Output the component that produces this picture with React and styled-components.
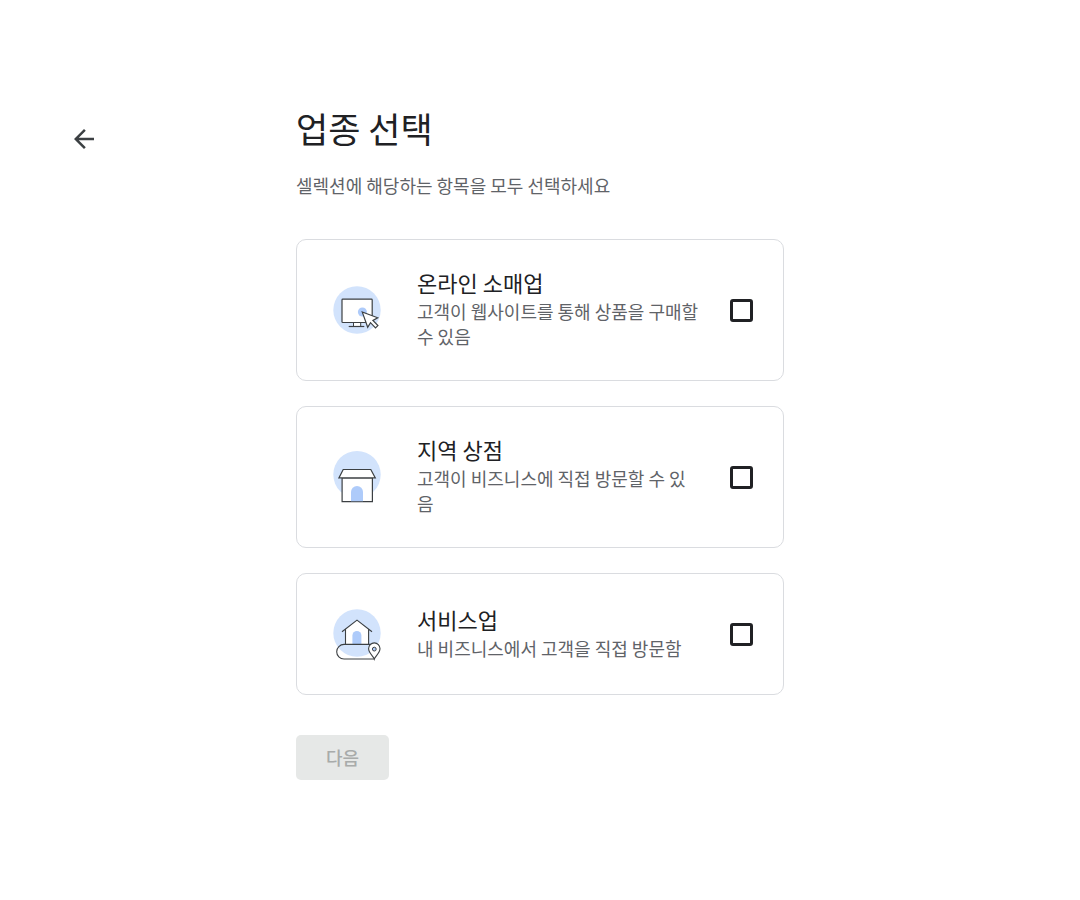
import React, { useState } from 'react'
import styled, { createGlobalStyle } from 'styled-components'

const GlobalStyle = createGlobalStyle`
  *, *::before, *::after {
    box-sizing: border-box;
  }

  body {
    margin: 0;
    background: #fff;
    color: #202124;
    font-family: "Noto Sans CJK KR", "Noto Sans", sans-serif;
  }
`

const Page = styled.main`
  display: grid;
  grid-template-columns: 1fr minmax(0, 488px) 1fr;
  padding: 105px 0 60px;
`

const Side = styled.div`
  padding: 10px 0 0 60px;
`

const BackButton = styled.button`
  display: flex;
  padding: 9px;
  border: 0;
  border-radius: 50%;
  background: none;
  color: #3c4043;
  cursor: pointer;

  svg {
    width: 30px;
    height: 30px;
    fill: currentColor;
  }
`

const Title = styled.h1`
  margin: 0;
  font-weight: 400;
  font-size: 35px;
  line-height: 45px;
`

const Subtitle = styled.p`
  margin: 22px 0 41px;
  color: #5f6368;
  font-size: 18px;
  line-height: 26px;
`

const CardList = styled.div`
  display: flex;
  flex-direction: column;
  gap: 25px;
`

const Card = styled.label`
  display: flex;
  align-items: center;
  gap: 30px;
  padding: 30px;
  border: 1px solid #dadce0;
  border-radius: 10px;
  cursor: pointer;
`

const Art = styled.svg`
  flex: none;
  width: 60px;
  height: 60px;
  fill: none;
`

const CardText = styled.span`
  display: flex;
  flex: 1;
  flex-direction: column;
  gap: 4px;
  min-width: 0;
  padding-bottom: 1px;
`

const CardTitle = styled.span`
  font-size: 22px;
  line-height: 25px;
`

const CardDescription = styled.span`
  color: #5f6368;
  font-size: 18px;
  line-height: 25px;
`

const Checkbox = styled.input`
  flex: none;
  appearance: none;
  width: 23px;
  height: 23px;
  margin: 0;
  border: 3px solid #202124;
  border-radius: 3px;
  background: #fff;
  cursor: pointer;

  &:checked {
    border-color: #1a73e8;
    background: #1a73e8;
  }
`

const NextButton = styled.button`
  height: 45px;
  margin-top: 40px;
  padding: 0 30px;
  border: 0;
  border-radius: 5px;
  background: #1a73e8;
  color: #fff;
  font-family: inherit;
  font-weight: 500;
  font-size: 18px;
  line-height: 25px;

  &:disabled {
    background: #e6e8e7;
    color: #a8abaa;
  }
`

const OnlineArt = () => (
  <Art viewBox="0 0 60 60" aria-hidden="true">
    <circle cx="30" cy="30" r="23.7" fill="#d2e3fc" />
    <rect x="15" y="19.2" width="30.2" height="23.3" rx="0.8" fill="#fff" stroke="#3c4043" strokeWidth="1.2" />
    <path d="M26.5 43v3.5h7.2V43" fill="#fff" stroke="#3c4043" />
    <path d="M21.7 46.5h15.6" stroke="#3c4043" strokeWidth="1.2" />
    <circle cx="35.4" cy="32" r="4.5" fill="#aecbfa" />
    <path
      d="M35.2 31.9l5.5 15.4 2.8-4.6 5 5.2 2.4-2.3-5-5.1 4.8-2.7z"
      fill="#fff"
      stroke="#3c4043"
      strokeWidth="1.2"
    />
  </Art>
)

const StoreArt = () => (
  <Art viewBox="0 0 60 60" aria-hidden="true">
    <circle cx="30" cy="27.6" r="23.7" fill="#d2e3fc" />
    <path d="M15.1 31h30.3v23.7H15.1z" fill="#fff" stroke="#3c4043" strokeWidth="1.2" />
    <path d="M16.2 22.5h27.6l4.5 8.4H11.9z" fill="#fff" stroke="#3c4043" strokeWidth="1.2" />
    <path d="M24 54.2V45a6 6 0 0 1 12 0v9.2z" fill="#aecbfa" />
  </Art>
)

const ServiceArt = () => (
  <Art viewBox="0 0 60 60" aria-hidden="true">
    <circle cx="30" cy="29" r="23.7" fill="#d2e3fc" />
    <path d="M18.5 40.3V25.5L30 16.2l11.6 9.3v14.8z" fill="#fff" />
    <path d="M18.5 40.3V25.2M41.6 40.3V25.2M15 27.8l15-11.7 15 11.7" stroke="#3c4043" strokeWidth="1.1" />
    <path d="M25.4 40.2v-8.7a4.5 4.5 0 0 1 9 0v8.7z" fill="#aecbfa" />
    <path d="M47.3 40.4H17a7.3 7.3 0 0 0 0 14.6h30.3" stroke="#3c4043" strokeWidth="1.1" />
    <path
      d="M47.3 55c-.8-2.9-5.7-5.6-5.7-10.4a5.7 5.7 0 0 1 11.4 0c0 4.8-4.9 7.5-5.7 10.4z"
      fill="#fff"
      stroke="#3c4043"
      strokeWidth="1.1"
    />
    <circle cx="47.3" cy="45.1" r="1.9" fill="#aecbfa" stroke="#3c4043" />
  </Art>
)

const businessTypes = [
  {
    id: 'online',
    title: '온라인 소매업',
    description: '고객이 웹사이트를 통해 상품을 구매할 수 있음',
    Icon: OnlineArt,
  },
  {
    id: 'store',
    title: '지역 상점',
    description: '고객이 비즈니스에 직접 방문할 수 있음',
    Icon: StoreArt,
  },
  {
    id: 'service',
    title: '서비스업',
    description: '내 비즈니스에서 고객을 직접 방문함',
    Icon: ServiceArt,
  },
]

const App = () => {
  const [selected, setSelected] = useState([])

  const toggle = (id) => {
    setSelected(selected.includes(id) ? selected.filter(item => item !== id) : [...selected, id])
  }

  return (
    <Page>
      <GlobalStyle />
      <Side>
        <BackButton type="button">
          <svg viewBox="0 0 24 24" aria-hidden="true">
            <path d="M20 11H7.83l5.59-5.59L12 4l-8 8 8 8 1.41-1.41L7.83 13H20v-2z" />
          </svg>
        </BackButton>
      </Side>
      <div>
        <Title>업종 선택</Title>
        <Subtitle>셀렉션에 해당하는 항목을 모두 선택하세요</Subtitle>
        <CardList>
          {businessTypes.map(({ id, title, description, Icon }) => (
            <Card key={id} htmlFor={id}>
              <Icon />
              <CardText>
                <CardTitle>{title}</CardTitle>
                <CardDescription>{description}</CardDescription>
              </CardText>
              <Checkbox
                type="checkbox"
                id={id}
                checked={selected.includes(id)}
                onChange={() => toggle(id)}
              />
            </Card>
          ))}
        </CardList>
        <NextButton type="button" disabled={selected.length === 0}>다음</NextButton>
      </div>
    </Page>
  )
}

export default App
